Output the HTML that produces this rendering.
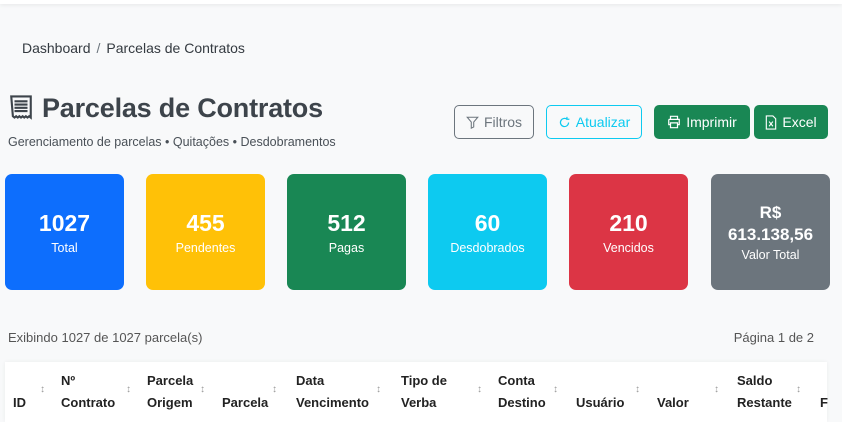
<!DOCTYPE html>
<html><head><meta charset="utf-8"><style>
*{box-sizing:border-box;margin:0;padding:0}
body{width:842px;height:417px;overflow:hidden;background:#f8f9fa;font-family:"Liberation Sans",sans-serif;color:#212529;position:relative}
.top{position:absolute;left:0;top:0;width:842px;height:4px;background:#fff;box-shadow:0 1px 4px rgba(0,0,0,.08)}
.bc{position:absolute;left:22px;top:40px;font-size:14px;color:#343a40}
.bc span{color:#6c757d;margin:0 6px}
h1{position:absolute;left:8px;top:93px;font-size:27px;font-weight:bold;color:#3d444b;letter-spacing:-0.2px;white-space:nowrap}
.sub{position:absolute;left:8px;top:135px;font-size:12.5px;color:#495057}
.btn{position:absolute;top:105px;height:34px;border-radius:5px;font-size:14px;display:flex;align-items:center;justify-content:center;gap:5px}
.card{position:absolute;top:174px;width:119px;height:116px;border-radius:7px;color:#fff;text-align:center;display:flex;flex-direction:column;justify-content:center;align-items:center}
.card b{font-size:23px;line-height:28px}
.card i{font-style:normal;font-size:12.5px;margin-top:4px}
.info{position:absolute;top:330px;font-size:13px;color:#555}
.tbl{position:absolute;left:5px;top:362px;width:822px;height:60px;background:#fff;box-shadow:0 0 4px rgba(0,0,0,.06)}
.th{position:absolute;font-size:13px;font-weight:bold;line-height:22px;color:#222}
.ar{position:absolute;top:384px;font-size:10px;color:#999}
</style></head><body>
<div class="top"></div>
<div class="bc">Dashboard<span>/</span>Parcelas de Contratos</div>
<h1><svg width="26" height="26" viewBox="0 0 16 16" style="vertical-align:-3px;margin-right:8px" fill="none" stroke="#3d444b" stroke-width="1.3"><path d="M2 1.5h12v13l-1-.8-1 .8-1-.8-1 .8-1-.8-1 .8-1-.8-1 .8-1-.8-1 .8-1-.8z"/><path d="M4 4.5h8M4 6.5h8M4 8.5h8M4 10.5h8"/></svg>Parcelas de Contratos</h1>
<div class="sub">Gerenciamento de parcelas • Quitações • Desdobramentos</div>
<div class="btn" style="left:454px;width:80px;border:1px solid #6c757d;color:#6c757d">
<svg width="13" height="13" viewBox="0 0 16 16" fill="none" stroke="#6c757d" stroke-width="1.3"><path d="M1.5 1.5h13l-5 6v6l-3 1.5v-7.5z"/></svg>Filtros</div>
<div class="btn" style="left:546px;width:96px;border:1px solid #0dcaf0;color:#0dcaf0">
<svg width="13" height="13" viewBox="0 0 16 16" fill="none" stroke="#0dcaf0" stroke-width="1.5"><path d="M13 8a5 5 0 1 1-2-4M11 1v3h3"/></svg>Atualizar</div>
<div class="btn" style="left:654px;width:96px;background:#198754;color:#fff">
<svg width="14" height="14" viewBox="0 0 16 16" fill="none" stroke="#fff" stroke-width="1.4"><path d="M4 5V1.5h8V5M2 5h12v6h-2M4 11H2V5M4 9h8v5.5H4z"/></svg>Imprimir</div>
<div class="btn" style="left:754px;width:74px;background:#198754;color:#fff">
<svg width="12" height="15" viewBox="0 0 12 16" fill="none" stroke="#fff" stroke-width="1.2"><path d="M1 1h7l3 3v11H1z"/><path d="M4 7l4 5M8 7l-4 5"/></svg>Excel</div>
<div class="card" style="left:5px;background:#0d6efd"><b>1027</b><i>Total</i></div>
<div class="card" style="left:146px;background:#ffc107"><b>455</b><i>Pendentes</i></div>
<div class="card" style="left:287px;background:#198754"><b>512</b><i>Pagas</i></div>
<div class="card" style="left:428px;background:#0dcaf0"><b>60</b><i>Desdobrados</i></div>
<div class="card" style="left:569px;background:#dc3545"><b>210</b><i>Vencidos</i></div>
<div class="card" style="left:711px;background:#6c757d"><b style="font-size:17px;line-height:22px">R$<br>613.138,56</b><i style="margin-top:2px">Valor Total</i></div>
<div class="info" style="left:8px">Exibindo 1027 de 1027 parcela(s)</div>
<div class="info" style="right:28px">Página 1 de 2</div>
<div class="tbl"></div>
<div class="th" style="left:13px;top:392px">ID</div>
<div class="th" style="left:61px;top:370px">Nº<br>Contrato</div>
<div class="th" style="left:147px;top:370px">Parcela<br>Origem</div>
<div class="th" style="left:222px;top:392px">Parcela</div>
<div class="th" style="left:296px;top:370px">Data<br>Vencimento</div>
<div class="th" style="left:401px;top:370px">Tipo de<br>Verba</div>
<div class="th" style="left:498px;top:370px">Conta<br>Destino</div>
<div class="th" style="left:576px;top:392px">Usuário</div>
<div class="th" style="left:657px;top:392px">Valor</div>
<div class="th" style="left:737px;top:370px">Saldo<br>Restante</div>
<div class="th" style="left:820px;top:392px">F</div>
<div class="ar" style="left:40px">↕</div><div class="ar" style="left:126px">↕</div>
<div class="ar" style="left:200px">↕</div><div class="ar" style="left:272px">↕</div>
<div class="ar" style="left:376px">↕</div><div class="ar" style="left:477px">↕</div>
<div class="ar" style="left:553px">↕</div><div class="ar" style="left:635px">↕</div>
<div class="ar" style="left:714px">↕</div><div class="ar" style="left:796px">↕</div>
</body></html>
